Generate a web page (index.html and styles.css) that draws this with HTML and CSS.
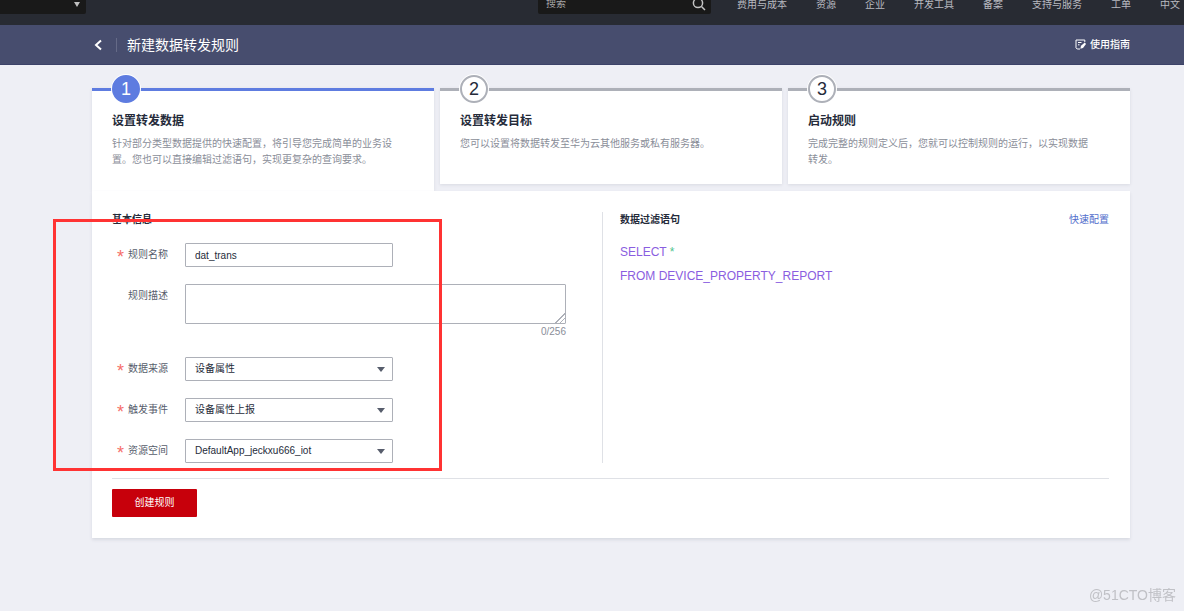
FILE: index.html
```html
<!DOCTYPE html>
<html lang="zh-CN">
<head>
<meta charset="utf-8">
<meta name="viewport" content="width=device-width, initial-scale=1">
<title>新建数据转发规则</title>
<link rel="stylesheet" href="styles.css">
</head>
<body>
<header class="topbar">
  <button class="region" type="button" aria-label="区域"><span class="region-arrow"></span></button>
  <div class="search">
    <input class="search-input" type="text" placeholder="搜索" aria-label="搜索">
    <svg class="search-icon" viewBox="0 0 14 14" aria-hidden="true"><circle cx="6" cy="6" r="4.6"/><path d="M9.5 9.5L13 13"/></svg>
  </div>
  <nav class="topnav">
    <a href="#">费用与成本</a>
    <a href="#">资源</a>
    <a href="#">企业</a>
    <a href="#">开发工具</a>
    <a href="#">备案</a>
    <a href="#">支持与服务</a>
    <a href="#">工单</a>
    <a href="#">中文</a>
  </nav>
</header>

<div class="titlebar">
  <button class="back" type="button" aria-label="返回"><svg viewBox="0 0 9 12" aria-hidden="true"><path d="M7 1.400L2 6l5 4.600"/></svg></button>
  <h1 class="title">新建数据转发规则</h1>
  <a class="guide" href="#">
    <svg viewBox="0 0 11 11" aria-hidden="true"><path d="M5 10H2.200L1 8.800V1h8.800v2M3 3.500h3.500M3 5.800h1.500"/><path class="pen" d="M5.300 9.800L6 6.800 9.800 3.600l1.200 1.400L8 9z"/></svg>
    使用指南
  </a>
</div>

<main class="content">
  <ol class="steps">
    <li class="step step-active">
      <span class="badge">1</span>
      <h2 class="step-title">设置转发数据</h2>
      <p class="step-text">针对部分类型数据提供的快速配置，将引导您完成简单的业务设置。您也可以直接编辑过滤语句，实现更复杂的查询要求。</p>
    </li>
    <li class="step">
      <span class="badge">2</span>
      <h2 class="step-title">设置转发目标</h2>
      <p class="step-text">您可以设置将数据转发至华为云其他服务或私有服务器。</p>
    </li>
    <li class="step">
      <span class="badge">3</span>
      <h2 class="step-title">启动规则</h2>
      <p class="step-text">完成完整的规则定义后，您就可以控制规则的运行，以实现数据转发。</p>
    </li>
  </ol>

  <form class="panel">
    <div class="columns">
      <section class="basic">
        <h3 class="heading">基本信息</h3>
        <div class="fields">
          <label class="label required" for="name">规则名称</label>
          <input class="control" id="name" type="text" value="dat_trans">

          <label class="label" for="desc">规则描述</label>
          <div class="description">
            <textarea class="control control-area" id="desc"></textarea>
            <span class="counter">0/256</span>
          </div>

          <label class="label required" for="source">数据来源</label>
          <div class="dropdown"><select class="control" id="source"><option>设备属性</option></select></div>

          <label class="label required" for="event">触发事件</label>
          <div class="dropdown"><select class="control" id="event"><option>设备属性上报</option></select></div>

          <label class="label required" for="space">资源空间</label>
          <div class="dropdown"><select class="control" id="space"><option>DefaultApp_jeckxu666_iot</option></select></div>
        </div>
      </section>
      <section class="filter">
        <div class="filter-head">
          <h3 class="heading">数据过滤语句</h3>
          <a class="quick" href="#">快速配置</a>
        </div>
        <div class="sql">
          <div>SELECT <span class="star">*</span></div>
          <div>FROM DEVICE_PROPERTY_REPORT</div>
        </div>
      </section>
    </div>
    <div class="actions"><button class="create" type="button">创建规则</button></div>
    <div class="highlight"></div>
  </form>
</main>
<div class="watermark">@51CTO博客</div>
</body>
</html>
```

FILE: styles.css
```css
* {
  box-sizing: border-box;
}

body {
  margin: 0;
  min-height: 100vh;
  background: #eeeff5;
  color: #252b3a;
  font: 10px/16px "Liberation Sans", "Noto Sans CJK SC", sans-serif;
}

h1, h2, h3, p, ol {
  margin: 0;
  padding: 0;
}

a {
  color: inherit;
  text-decoration: none;
}

button, input, select, textarea {
  font: inherit;
  color: inherit;
}

button {
  border: 0;
  padding: 0;
  cursor: pointer;
}

/* top navigation */
.topbar {
  display: flex;
  align-items: flex-end;
  height: 25px;
  padding: 0 4px 11px 0;
  background: #282b33;
  color: #b8bac0;
}

.region {
  display: flex;
  flex: none;
  align-items: center;
  justify-content: flex-end;
  width: 86px;
  height: 20px;
  padding-right: 6px;
  border-radius: 0 0 2px 0;
  background: #191919;
}

.region-arrow {
  border: 3px solid transparent;
  border-top: 5px solid #c0c0c0;
  border-bottom: 0;
}

.search {
  display: flex;
  align-items: center;
  width: 173px;
  height: 20px;
  margin: 0 26px 0 auto;
  padding: 0 5px 0 8px;
  border-radius: 2px;
  background: #191919;
}

.search-input {
  flex: 1;
  min-width: 0;
  padding: 0;
  border: 0;
  background: none;
  outline: 0;
}

.search-input::placeholder {
  color: #a6a6a6;
}

.search-icon {
  width: 14px;
  height: 14px;
  fill: none;
  stroke: #c4c4c4;
  stroke-width: 1.5;
}

.topnav {
  display: flex;
  gap: 29px;
  height: 18px;
  line-height: 18px;
  white-space: nowrap;
}

/* page title */
.titlebar {
  display: flex;
  align-items: center;
  height: 40px;
  padding: 0 54px 0 94px;
  border-bottom: 1px solid #3c4268;
  background: #474d6e;
  color: #fff;
}

.back {
  display: flex;
  width: 23px;
  height: 14px;
  align-items: center;
  border-right: 1px solid #656a87;
  background: none;
}

.back svg {
  width: 9px;
  height: 12px;
  fill: none;
  stroke: #fff;
  stroke-width: 2;
}

.title {
  margin-left: 10px;
  font-size: 14px;
  font-weight: 400;
  line-height: 20px;
}

.guide {
  display: flex;
  gap: 4px;
  align-items: center;
  margin-left: auto;
  font-weight: 500;
}

.guide svg {
  width: 11px;
  height: 11px;
  fill: none;
  stroke: #fff;
}

.guide .pen {
  fill: #fff;
  stroke: none;
}

/* steps */
.content {
  padding: 23px 54px 24px 92px;
}

.steps {
  display: grid;
  grid-template-columns: repeat(3, 1fr);
  gap: 6px;
  list-style: none;
}

.step {
  position: relative;
  min-height: 96px;
  margin-bottom: 7px;
  padding: 22px 36px 16px 20px;
  border-top: 3px solid #adb0b8;
  background: #fff;
  box-shadow: 0 1px 3px #d8dae2;
}

.step-active {
  margin-bottom: 0;
  border-color: #5e7ce0;
}

.badge {
  position: absolute;
  top: -16px;
  left: 20px;
  width: 28px;
  height: 28px;
  border: 2px solid #adb0b8;
  border-radius: 50%;
  background: #fff;
  box-shadow: 0 0 0 1px #fff;
  font-size: 18px;
  line-height: 25px;
  text-align: center;
}

.step-active .badge {
  border-color: #5e7ce0;
  background: #5e7ce0;
  color: #fff;
}

.step-title {
  margin-bottom: 7px;
  font-size: 12px;
  font-weight: 700;
  line-height: 16px;
}

.step-text {
  color: #8a8e99;
}

/* form panel */
.panel {
  position: relative;
  padding: 21px 21px 21px 20px;
  background: #fff;
  box-shadow: 0 2px 3px #d8dae2;
}

.columns {
  display: grid;
  grid-template-columns: 491fr 506fr;
}

.basic {
  padding-right: 36px;
  border-right: 1px solid #dfe1e6;
}

.heading {
  font-size: 10px;
  font-weight: 700;
  line-height: 16px;
}

.fields {
  display: grid;
  grid-template-columns: 56px 1fr;
  gap: 17px;
  margin-top: 15px;
}

.label {
  color: #575d6c;
  line-height: 24px;
  text-align: right;
}

.required::before {
  content: "*";
  margin-right: 4px;
  color: #f66f6a;
  font-size: 18px;
  line-height: 16px;
  vertical-align: -5px;
}

.control {
  display: block;
  width: 208px;
  height: 24px;
  padding: 0 9px;
  border: 1px solid #adb0b8;
  border-radius: 1px;
  outline: 0;
  background: #fff;
  appearance: none;
}

.control-area {
  width: 100%;
  height: 40px;
  resize: vertical;
}

.control-area::-webkit-resizer {
  background: linear-gradient(135deg, transparent 66%, #adb0b8 66%, #adb0b8 72%, transparent 72%, transparent 80%, #adb0b8 80%, #adb0b8 86%, transparent 86%);
}

.description {
  display: flex;
  flex-direction: column;
}

.counter {
  color: #8a8e99;
  text-align: right;
}

.dropdown {
  position: relative;
  width: 208px;
}

.dropdown::after {
  content: "";
  position: absolute;
  top: 10px;
  right: 8px;
  border: 4px solid transparent;
  border-top: 5px solid #575d6c;
  border-bottom: 0;
  pointer-events: none;
}

.filter {
  padding-left: 17px;
}

.filter-head {
  display: flex;
  justify-content: space-between;
}

.quick {
  color: #526ecc;
}

.sql {
  margin-top: 12px;
  color: #8a5ee0;
  font-size: 12px;
  line-height: 24px;
}

.star {
  color: #50c48f;
}

.actions {
  margin-top: 15px;
  padding-top: 10px;
  border-top: 1px solid #dfe1e6;
}

.create {
  width: 85px;
  height: 28px;
  border-radius: 1px;
  background: #c7000b;
  color: #fff;
}

/* marks drawn over the page */
.highlight {
  position: absolute;
  top: 28px;
  left: -39px;
  width: 389px;
  height: 252px;
  border: 3px solid #f33;
  pointer-events: none;
}

.watermark {
  position: fixed;
  right: 8px;
  bottom: 6px;
  color: #c0c1c6;
  font-size: 14px;
  line-height: 20px;
}
```
